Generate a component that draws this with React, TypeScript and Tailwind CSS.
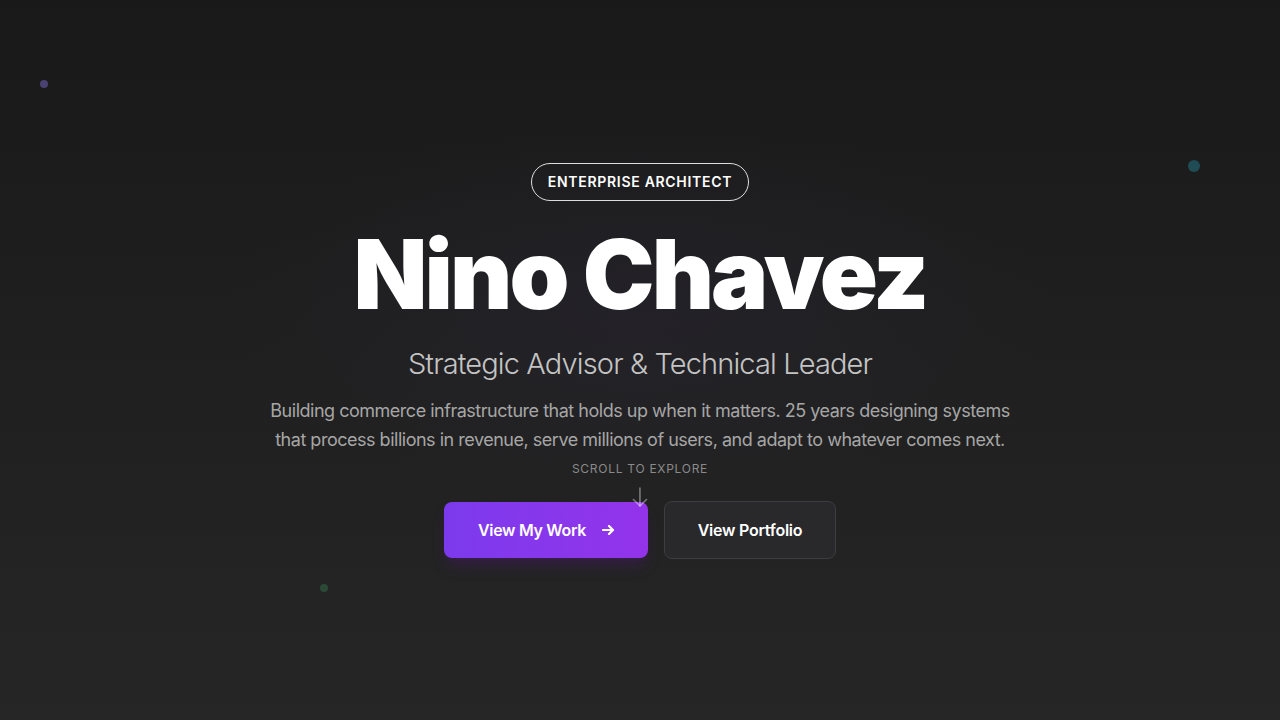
export default function App() {
  return (
    <div
      className="relative flex h-[720px] w-full items-center justify-center overflow-hidden bg-gradient-to-b from-[#191919] to-[#262626] text-white"
      style={{ fontFamily: "Inter, 'Noto Sans', sans-serif" }}
    >
      {/* soft glow behind the heading */}
      <div className="pointer-events-none absolute left-1/2 top-[310px] h-[420px] w-[900px] -translate-x-1/2 -translate-y-1/2 rounded-full bg-[radial-gradient(ellipse_at_center,rgba(60,50,90,0.16),transparent_65%)]" />

      {/* floating dots */}
      <span className="absolute left-[40px] top-[80px] h-2 w-2 rounded-full bg-[#4a4272]" />
      <span className="absolute left-[1188px] top-[160px] h-3 w-3 rounded-full bg-[#1f4c55]" />
      <span className="absolute left-[320px] top-[584px] h-2 w-2 rounded-full bg-[#2a4a36]" />

      <section className="relative flex flex-col items-center pt-[2px] text-center">
        <span className="rounded-full border border-white/85 px-4 py-[9px] text-sm font-semibold uppercase leading-[18px] tracking-[0.05em] text-white">
          Enterprise Architect
        </span>

        <h1 className="mt-[25px] text-8xl font-black leading-none tracking-[-0.03em] text-white">
          Nino Chavez
        </h1>

        <h2 className="mt-[24px] text-[29px] font-light leading-9 tracking-[-0.03em] text-[#c4c4c4]">
          Strategic Advisor &amp; Technical Leader
        </h2>

        <p className="mt-[14px] max-w-[760px] text-lg leading-[29px] tracking-[-0.027em] text-[#a6a6a6]">
          Building commerce infrastructure that holds up when it matters. 25 years designing systems
          that process billions in revenue, serve millions of users, and adapt to whatever comes next.
        </p>

        <div className="mt-[47px] flex items-center gap-4">
          <button className="flex h-14 w-[204px] items-center justify-center gap-4 rounded-lg bg-gradient-to-r from-[#7c3aed] to-[#9333ea] text-base font-semibold tracking-[-0.02em] text-white shadow-lg shadow-purple-900/30">
            View My Work
            <svg width="12" height="10" viewBox="0 0 12 10" fill="none" stroke="currentColor" strokeWidth="2.2" strokeLinecap="round" strokeLinejoin="round">
              <path d="M1 5h10" />
              <path d="M7 1l4 4-4 4" />
            </svg>
          </button>
          <button className="flex h-[58px] w-[172px] items-center justify-center rounded-lg border border-[#3d3d40] bg-[#29292b] text-base font-semibold tracking-[-0.015em] text-white">
            View Portfolio
          </button>
        </div>

        {/* scroll hint overlays the buttons */}
        <div className="absolute left-1/2 top-[300px] flex -translate-x-1/2 flex-col items-center gap-[10px]">
          <span className="whitespace-nowrap text-xs uppercase leading-4 tracking-[0.06em] text-[#8a8a8a]">
            Scroll to explore
          </span>
          <svg width="16" height="20" viewBox="0 0 16 20" fill="none" stroke="white" strokeOpacity="0.4" strokeWidth="1.6" strokeLinecap="round" strokeLinejoin="round">
            <path d="M8 1v18" />
            <path d="M1.5 12.5L8 19l6.5-6.5" />
          </svg>
        </div>
      </section>
    </div>
  );
}
